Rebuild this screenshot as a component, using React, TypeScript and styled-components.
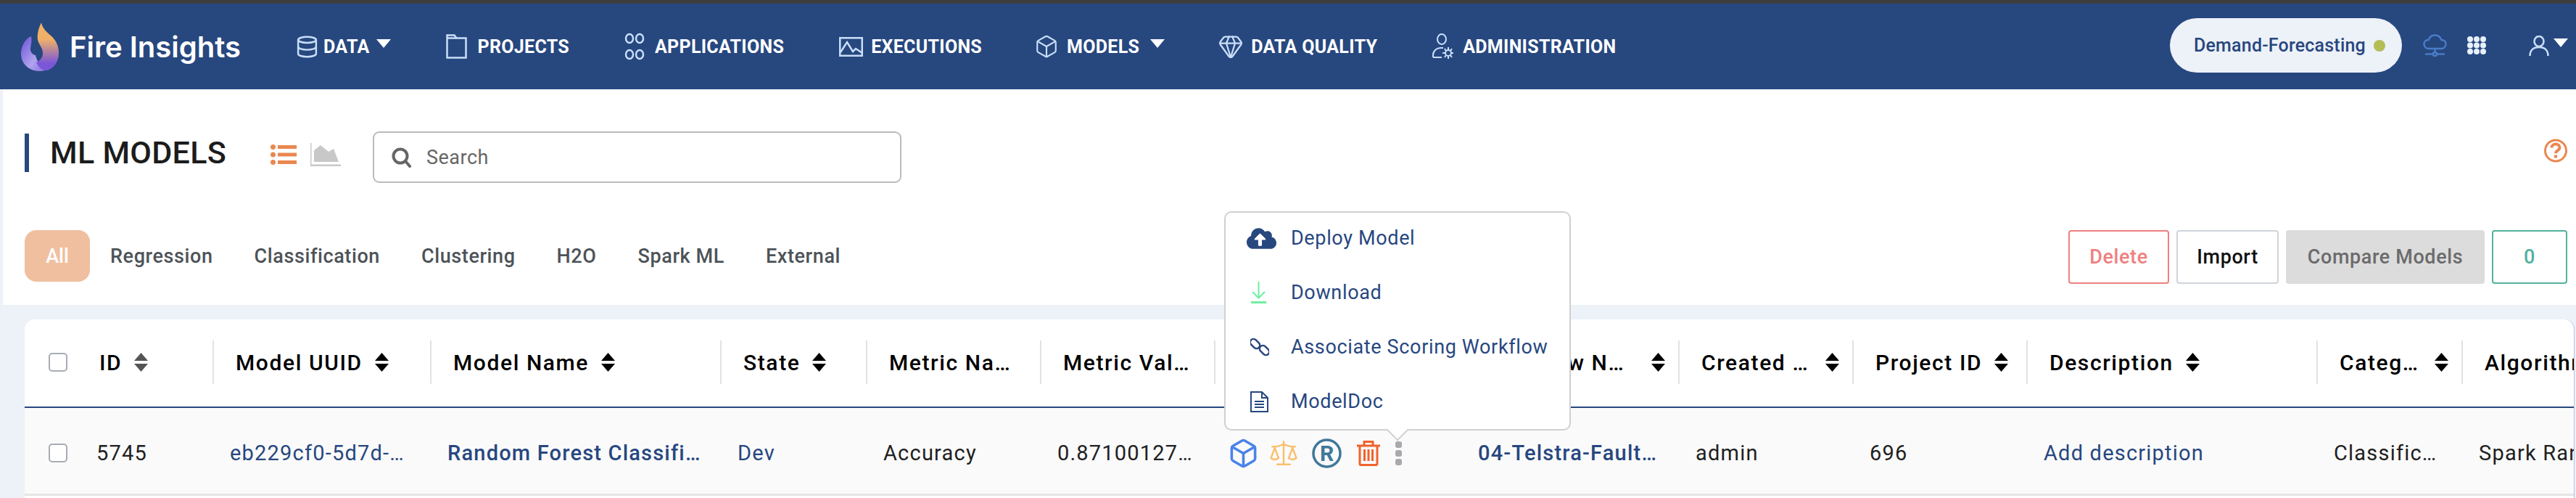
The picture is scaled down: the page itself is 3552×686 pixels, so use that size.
import React from "react";
import styled, { createGlobalStyle } from "styled-components";
import { Box, Database, Gem, Scale } from "lucide-react";
import { FaCloudUploadAlt } from "react-icons/fa";

const navy = "#27477f";
const iconBlue = "#c9def8";

const GlobalStyle = createGlobalStyle`
  html, body {
    margin: 0;
    padding: 0;
    background: #edf1f8;
    font-family: Roboto, "Liberation Sans", sans-serif;
  }
  * { box-sizing: border-box; }
`;

const Page = styled.div`
  width: 3552px;
  height: 686px;
  overflow: hidden;
  background: #edf1f8;
`;

const WindowEdge = styled.div`
  height: 5px;
  background: #3d3d3d;
`;

const NavBar = styled.header`
  height: 118px;
  background: ${navy};
  display: flex;
  align-items: center;
  padding: 0 11px 0 29px;
`;

const Brand = styled.div`
  display: flex;
  align-items: center;
  gap: 15px;
  margin-right: 82px;
`;

const BrandName = styled.span`
  font-family: Inter, Roboto, sans-serif;
  font-size: 40px;
  font-weight: 600;
  color: #fff;
  width: 233px;
  white-space: nowrap;
`;

const NavItems = styled.nav`
  display: flex;
  align-items: center;
  gap: 76px;
`;

const NavItem = styled.a<{ $gap: number }>`
  display: flex;
  align-items: center;
  gap: ${({ $gap }) => $gap}px;
  color: #fff;
  font-size: 25px;
  font-weight: 700;
  letter-spacing: 0.3px;
  white-space: nowrap;
`;

const Caret = styled.span`
  width: 0;
  height: 0;
  margin-top: -8px;
  border-left: 10px solid transparent;
  border-right: 10px solid transparent;
  border-top: 12px solid #fff;
`;

const NavRight = styled.div`
  margin: -3px 0 0 auto;
  display: flex;
  align-items: center;
`;

const WorkspacePill = styled.div`
  width: 320px;
  height: 75px;
  border-radius: 38px;
  background: #edf1f8;
  color: ${navy};
  display: flex;
  align-items: center;
  justify-content: space-between;
  padding: 0 23px 0 33px;
  font-size: 25px;
  font-weight: 500;
  letter-spacing: 0.2px;
  margin-right: 29px;
`;

const StatusDot = styled.span`
  width: 16px;
  height: 16px;
  border-radius: 50%;
  background: #b5bd55;
`;

const NavIconGroup = styled.div<{ $gap: number; $after: number }>`
  display: flex;
  align-items: center;
  gap: ${({ $gap }) => $gap}px;
  margin-right: ${({ $after }) => $after}px;
`;

const DataGlyph = styled(Database)`
  margin: 0 -4px;
`;

const ModelGlyph = styled(Box)`
  margin: 0 -4px;
`;

const QualityGlyph = styled(Gem)`
  margin: 0 -3px;
`;

const ToolPanel = styled.section`
  height: 297px;
  margin-left: 4px;
  background: #fff;
  padding: 58px 12px 0 30px;
`;

const TitleRow = styled.div`
  height: 71px;
  display: flex;
  align-items: flex-start;
`;

const PageTitle = styled.h1`
  margin: 3px 0 0;
  height: 53px;
  width: 339px;
  border-left: 6px solid ${navy};
  padding-left: 29px;
  font-size: 43px;
  line-height: 53px;
  font-weight: 500;
  letter-spacing: 0.3px;
  color: #1c1c1c;
  white-space: nowrap;
`;

const ViewSwitch = styled.div`
  display: flex;
  align-items: center;
  gap: 19px;
  margin-top: 16px;
  width: 141px;
`;

const SearchBox = styled.div`
  width: 729px;
  height: 71px;
  border: 2px solid #bbb;
  border-radius: 9px;
  display: flex;
  align-items: center;
  gap: 21px;
  padding-left: 24px;
  color: #666;
  font-size: 27px;
  letter-spacing: 0.5px;
`;

const HelpButton = styled.div`
  margin: 10px 0 0 auto;
  display: flex;
`;

const FilterRow = styled.div`
  margin-top: 65px;
  display: flex;
  align-items: flex-start;
  justify-content: space-between;
`;

const Tabs = styled.div`
  display: flex;
  align-items: center;
  height: 71px;
`;

const AllTab = styled.span`
  width: 90px;
  height: 71px;
  border-radius: 16px;
  background: #f0bfa0;
  color: #fff;
  font-size: 27px;
  font-weight: 500;
  display: flex;
  align-items: center;
  justify-content: center;
  margin-right: 28px;
`;

const Tab = styled.span`
  font-size: 27px;
  font-weight: 500;
  letter-spacing: 0.6px;
  color: #4d5358;
  margin-right: 57px;
  white-space: nowrap;
`;

const Actions = styled.div`
  display: flex;
  align-items: center;
  gap: 10px;
`;

const ActionButton = styled.button<{ $width: number; $border: string; $fg: string; $bg?: string }>`
  width: ${({ $width }) => $width}px;
  height: 74px;
  padding: 0;
  border: 2px solid ${({ $border }) => $border};
  border-radius: 4px;
  background: ${({ $bg }) => $bg || "#fff"};
  color: ${({ $fg }) => $fg};
  font-family: inherit;
  font-size: 27px;
  font-weight: 500;
  letter-spacing: 0.6px;
`;

const Card = styled.section`
  margin: 20px 2px 0 34px;
  height: 246px;
  background: #fff;
  border-radius: 14px 14px 0 0;
  border-right: 1px solid #bdbde0;
`;

const columns = "259px 300px 400px 201px 240px 240px 340px 300px 240px 240px 400px 200px 155px";

const HeadRow = styled.div`
  height: 122px;
  display: grid;
  grid-template-columns: ${columns};
  align-items: center;
  padding-bottom: 2px;
  border-bottom: 2px solid ${navy};
`;

const HeadLabel = styled.span`
  white-space: nowrap;
  overflow: hidden;
  text-overflow: ellipsis;
`;

const HeadCell = styled.div<{ $gap?: number; $pad?: number }>`
  height: 60px;
  display: flex;
  align-items: center;
  gap: ${({ $gap }) => $gap ?? 17}px;
  padding: 0 ${({ $pad }) => $pad ?? 18}px 0 30px;
  border-left: 2px solid #e2e2e2;
  font-size: 30px;
  font-weight: 500;
  letter-spacing: 1.6px;
  color: #000;
  min-width: 0;

  &:first-child {
    border-left: 0;
    padding-left: 33px;
  }
  &:last-child {
    padding-right: 0;
    overflow: hidden;
  }
  &:last-child ${HeadLabel} {
    flex: none;
    overflow: visible;
  }
`;

const CheckBox = styled.span<{ $space: number }>`
  flex: none;
  width: 26px;
  height: 26px;
  border: 2px solid #a8adb5;
  border-radius: 5px;
  background: #fff;
  margin-right: ${({ $space }) => $space}px;
`;

const DataRow = styled.div`
  height: 121px;
  display: grid;
  grid-template-columns: ${columns};
  background: #fafafa;
  border-bottom: 3px solid #e6e6e6;
`;

const CellText = styled.span`
  white-space: nowrap;
  overflow: hidden;
  text-overflow: ellipsis;
`;

const DataCell = styled.div<{ $link?: boolean; $strong?: boolean }>`
  position: relative;
  display: flex;
  align-items: center;
  min-width: 0;
  padding: 6px 26px 0 24px;
  font-size: 29px;
  letter-spacing: 1.2px;
  font-weight: ${({ $strong }) => ($strong ? 500 : 400)};
  color: ${({ $link, $strong }) => ($link || $strong ? navy : "#212121")};

  &:first-child {
    padding-left: 33px;
  }
  &:last-child {
    padding-right: 0;
    overflow: hidden;
  }
  &:last-child ${CellText} {
    flex: none;
    overflow: visible;
  }
`;

const RowTools = styled.div`
  display: flex;
  align-items: center;
  gap: 21px;
`;

const ToolCube = styled(Box)`
  margin: 0 -5px;
`;

const ToolScale = styled(Scale)`
  margin: 0 -3px;
`;

const RegisteredMark = styled.text`
  font-family: Roboto, sans-serif;
  font-size: 30px;
  font-weight: 700;
  fill: #40789a;
  letter-spacing: 0;
`;

const MoreDots = styled.div`
  display: flex;
  flex-direction: column;
  gap: 3px;

  span {
    width: 9px;
    height: 9px;
    border-radius: 3px;
    background: #a8a9ad;
  }
`;

const Popover = styled.div`
  position: absolute;
  left: 14px;
  top: -271px;
  width: 478px;
  height: 302px;
  background: #fff;
  border: 2px solid #d0d0d0;
  border-radius: 10px;
  z-index: 5;

  &::after {
    content: "";
    position: absolute;
    left: 226px;
    bottom: -12px;
    width: 20px;
    height: 20px;
    background: #fff;
    border-right: 2px solid #d0d0d0;
    border-bottom: 2px solid #d0d0d0;
    transform: rotate(45deg);
  }
`;

const MenuItem = styled.div`
  height: 75px;
  padding-bottom: 5px;
  display: flex;
  align-items: center;
  color: ${navy};
  font-size: 27px;
  letter-spacing: 0.65px;
  white-space: nowrap;
`;

const MenuIcon = styled.span`
  width: 90px;
  padding-left: 34px;
  display: flex;
  align-items: center;
  flex: none;
`;

const DeployGlyph = styled(FaCloudUploadAlt)`
  margin-left: -5px;
`;

const SortIcon = ({ muted }: { muted?: boolean }) => (
  <svg width="19" height="26" viewBox="0 0 19 26" style={{ flex: "none" }}>
    <path d="M9.5 0 19 11H0Z M0 15h19L9.5 26Z" fill={muted ? "#555" : "#000"} />
  </svg>
);

const Logo = () => (
  <svg width="52" height="68" viewBox="0 0 52 68">
    <defs>
      <linearGradient id="flame" x1="0" y1="0" x2="0" y2="1">
        <stop offset="0.35" stopColor="#efb068" />
        <stop offset="0.85" stopColor="#7a56d8" />
      </linearGradient>
      <linearGradient id="body" x1="0" y1="0" x2="1" y2="1">
        <stop offset="0" stopColor="#6a4fd8" />
        <stop offset="0.6" stopColor="#b0a4ee" />
        <stop offset="1" stopColor="#8266de" />
      </linearGradient>
    </defs>
    <path d="M14 20C4 24 0 36 0 44c0 14 11 24 26 24 6 0 9-2 10-4-10-2-14-10-16-18-3 0-8-4-7-10 1-6 2-11 1-16Z" fill="url(#body)" />
    <path d="M28 1c-4 8-6 16-5 24 2 8 7 10 7 19 0 6-5 10-9 12 3 7 9 11 15 11 9-3 16-11 16-24 0-10-4-18-11-24-6-5-12-11-13-18Z" fill="url(#flame)" />
  </svg>
);

const FolderIcon = () => (
  <svg width="29" height="34" viewBox="0 0 29 34" fill="none" stroke={iconBlue} strokeWidth="2.5">
    <path d="M1.5 32.5V1.5h10l3 4h13v27Z" />
    <path d="M1.5 5.5h13" />
  </svg>
);

const AppsIcon = () => (
  <svg width="28" height="38" viewBox="0 0 28 38" fill="none" stroke={iconBlue} strokeWidth="2.5">
    <ellipse cx="7" cy="8" rx="5" ry="6" />
    <ellipse cx="21" cy="8" rx="5" ry="6" />
    <ellipse cx="7" cy="30" rx="5" ry="6" />
    <ellipse cx="21" cy="30" rx="5" ry="6" />
  </svg>
);

const ExecutionsIcon = () => (
  <svg width="33" height="27" viewBox="0 0 33 27" fill="none" stroke={iconBlue} strokeWidth="2.5">
    <rect x="1.25" y="1.25" width="30.5" height="24.5" />
    <path d="M2 21 11 7l8 13 4-4 9 6" />
  </svg>
);

const AdminIcon = () => (
  <svg width="29" height="36" viewBox="0 0 29 36" fill="none" stroke={iconBlue} strokeWidth="2">
    <ellipse cx="13" cy="8" rx="6" ry="7" />
    <path d="M1 33c-1-8 4-13 11-13h3" />
    <path d="M1 33h12" />
    <circle cx="22" cy="27" r="4" />
    <path d="M22 19v4M22 31v4M14 27h4M26 27h3M17 21l2 3M27 21l-2 3M17 33l2-3M27 33l-2-3" />
  </svg>
);

const CloudNetIcon = () => (
  <svg width="33" height="32" viewBox="0 0 33 32" fill="none" stroke="#4a7cc8" strokeWidth="2.5">
    <path d="M8 20C4 20 1.500 17 1.500 13.500S4 8 7.500 8C9 4 12.500 1.500 16.500 1.500S24 4 25.500 8C29 8 31.500 10 31.500 13.500S29 20 25 20Z" />
    <path d="M16.500 20v6M3 27.500h27" />
    <circle cx="16.500" cy="27.500" r="2.500" fill={navy} />
  </svg>
);

const AppGridIcon = () => (
  <svg width="26" height="25" viewBox="0 0 26 25" fill="#e8f0fb">
    {[4, 12.5, 21].flatMap((y) =>
      [4, 13, 22].map((x) => <circle key={`${x}-${y}`} cx={x} cy={y} r="4" />)
    )}
  </svg>
);

const UserIcon = () => (
  <svg width="28" height="28" viewBox="0 0 28 28" fill="none" stroke={iconBlue} strokeWidth="2.500">
    <ellipse cx="14" cy="8" rx="6.500" ry="7" />
    <path d="M1.500 28c0-8 5-12 12.500-12s12.500 4 12.500 12" />
  </svg>
);

const ListIcon = () => (
  <svg width="36" height="28" viewBox="0 0 36 28" fill="#ea8750">
    <circle cx="3.500" cy="3.500" r="3.500" />
    <circle cx="3.500" cy="14" r="3.500" />
    <circle cx="3.500" cy="24.500" r="3.500" />
    <rect x="10" y="1" width="26" height="5" />
    <rect x="10" y="11.500" width="26" height="5" />
    <rect x="10" y="22" width="26" height="5" />
  </svg>
);

const AreaIcon = () => (
  <svg width="42" height="32" viewBox="0 0 42 32" fill="#c8c8c8">
    <path d="M5 26V10L14 3l11 9 7-4 7 18Z" />
    <path d="M0 0h1.500v29.500H42V32H0Z" />
  </svg>
);

const SearchIcon = () => (
  <svg width="27" height="28" viewBox="0 0 27 28" fill="none" stroke="#666" strokeWidth="4">
    <circle cx="12" cy="12" r="9.500" />
    <path d="m19 19 6 7" strokeLinecap="round" />
  </svg>
);

const HelpIcon = () => (
  <svg width="32" height="33" viewBox="0 0 32 33" fill="none" stroke="#ea8750">
    <circle cx="16" cy="16.500" r="14.500" strokeWidth="3" />
    <path d="M10.500 12.500c0-3.500 2.500-5 5.500-5s5.500 1.800 5.500 4.800c0 4-5.500 4-5.500 8" strokeWidth="4" />
    <path d="M16 22.500v4" strokeWidth="4" />
  </svg>
);

const DownloadIcon = () => (
  <svg width="23" height="30" viewBox="0 0 23 30" fill="none" stroke="#6ef0a0" strokeWidth="2">
    <path d="M11.500 0v22M3 14l8.500 8.500L20 14" />
    <path d="M1 28.500h21" strokeWidth="3" />
  </svg>
);

const ChainIcon = () => (
  <svg width="26" height="26" viewBox="0 0 26 26" fill="none" stroke={navy} strokeWidth="2.500">
    <rect x="-1" y="4" width="15" height="9" rx="4.500" transform="rotate(45 6.500 8.500)" />
    <rect x="12" y="13" width="15" height="9" rx="4.500" transform="rotate(45 19.500 17.500)" />
  </svg>
);

const DocIcon = () => (
  <svg width="25" height="29" viewBox="0 0 25 29" fill="none" stroke={navy} strokeWidth="2">
    <path d="M1 1h15l8 8v19H1Z" />
    <path d="M16 1v8h8M6 14h13M6 18h13M6 22h13" />
  </svg>
);

const TrashIcon = () => (
  <svg width="32" height="36" viewBox="0 0 32 36" fill="none" stroke="#f0622c" strokeWidth="3">
    <path d="M0 8h32M10 7V2.500h12V7M4 8v25a1.500 1.500 0 0 0 1.500 1.500h21A1.500 1.500 0 0 0 28 33V8" />
    <path d="M10.500 13v16M16 13v16M21.500 13v16" />
  </svg>
);

const RegisteredIcon = () => (
  <svg width="41" height="41" viewBox="0 0 41 41" fill="none">
    <circle cx="20.500" cy="20.500" r="18.500" stroke="#40789a" strokeWidth="3.500" />
    <RegisteredMark x="20.500" y="31" textAnchor="middle">R</RegisteredMark>
  </svg>
);

const navLinks = [
  { label: "DATA", gap: 10, icon: <DataGlyph size={33} color={iconBlue} strokeWidth={1.8} />, caret: true },
  { label: "PROJECTS", gap: 14, icon: <FolderIcon /> },
  { label: "APPLICATIONS", gap: 14, icon: <AppsIcon /> },
  { label: "EXECUTIONS", gap: 11, icon: <ExecutionsIcon /> },
  { label: "MODELS", gap: 15, icon: <ModelGlyph size={34} color={iconBlue} strokeWidth={1.5} />, caret: true },
  { label: "DATA QUALITY", gap: 13, icon: <QualityGlyph size={36} color={iconBlue} strokeWidth={1.5} /> },
  { label: "ADMINISTRATION", gap: 13, icon: <AdminIcon /> },
];

const tabs = ["Regression", "Classification", "Clustering", "H2O", "Spark ML", "External"];

const headers = [
  { label: "ID", sort: "muted" },
  { label: "Model UUID", sort: "on" },
  { label: "Model Name", sort: "on" },
  { label: "State", sort: "on" },
  { label: "Metric Name" },
  { label: "Metric Value", pad: 30 },
  { label: "Actions" },
  { label: "Workflow Name", sort: "on", gap: 24 },
  { label: "Created By", sort: "on" },
  { label: "Project ID", sort: "on" },
  { label: "Description", sort: "on" },
  { label: "Category", sort: "on" },
  { label: "Algorithm", sort: "on" },
];

const menu = [
  { label: "Deploy Model", icon: <DeployGlyph size={41} color={navy} /> },
  { label: "Download", icon: <DownloadIcon /> },
  { label: "Associate Scoring Workflow", icon: <ChainIcon /> },
  { label: "ModelDoc", icon: <DocIcon /> },
];

export default function App() {
  return (
    <Page>
      <GlobalStyle />
      <WindowEdge />
      <NavBar>
        <Brand>
          <Logo />
          <BrandName>Fire Insights</BrandName>
        </Brand>
        <NavItems>
          {navLinks.map((link) => (
            <NavItem key={link.label} $gap={link.gap}>
              {link.icon}
              {link.label}
              {link.caret && <Caret />}
            </NavItem>
          ))}
        </NavItems>
        <NavRight>
          <WorkspacePill>
            Demand-Forecasting
            <StatusDot />
          </WorkspacePill>
          <NavIconGroup $gap={28} $after={59}>
            <CloudNetIcon />
            <AppGridIcon />
          </NavIconGroup>
          <NavIconGroup $gap={6} $after={0}>
            <UserIcon />
            <Caret />
          </NavIconGroup>
        </NavRight>
      </NavBar>

      <ToolPanel>
        <TitleRow>
          <PageTitle>ML MODELS</PageTitle>
          <ViewSwitch>
            <ListIcon />
            <AreaIcon />
          </ViewSwitch>
          <SearchBox>
            <SearchIcon />
            Search
          </SearchBox>
          <HelpButton>
            <HelpIcon />
          </HelpButton>
        </TitleRow>
        <FilterRow>
          <Tabs>
            <AllTab>All</AllTab>
            {tabs.map((tab) => (
              <Tab key={tab}>{tab}</Tab>
            ))}
          </Tabs>
          <Actions>
            <ActionButton $width={139} $border="#ee8080" $fg="#ee8080">Delete</ActionButton>
            <ActionButton $width={141} $border="#cfd4da" $fg="#111">Import</ActionButton>
            <ActionButton $width={274} $border="#dcdcdc" $bg="#dcdcdc" $fg="#6b6b6b">Compare Models</ActionButton>
            <ActionButton $width={104} $border="#52b29d" $fg="#52b29d">0</ActionButton>
          </Actions>
        </FilterRow>
      </ToolPanel>

      <Card>
        <HeadRow>
          {headers.map((header, i) => (
            <HeadCell key={header.label} $gap={header.gap} $pad={header.pad}>
              {i === 0 && <CheckBox $space={27} />}
              <HeadLabel>{header.label}</HeadLabel>
              {header.sort && <SortIcon muted={header.sort === "muted"} />}
            </HeadCell>
          ))}
        </HeadRow>
        <DataRow>
          <DataCell>
            <CheckBox $space={40} />
            <CellText>5745</CellText>
          </DataCell>
          <DataCell $link><CellText>eb229cf0-5d7d-4b1e-9a6c-2f3</CellText></DataCell>
          <DataCell $strong><CellText>Random Forest Classification Model</CellText></DataCell>
          <DataCell $link><CellText>Dev</CellText></DataCell>
          <DataCell><CellText>Accuracy</CellText></DataCell>
          <DataCell><CellText>0.8710012738853503</CellText></DataCell>
          <DataCell>
            <RowTools>
              <ToolCube size={43} color="#4a83ea" strokeWidth={2} />
              <ToolScale size={42} color="#f9c06e" strokeWidth={1.4} />
              <RegisteredIcon />
              <TrashIcon />
              <MoreDots>
                <span />
                <span />
                <span />
              </MoreDots>
            </RowTools>
            <Popover>
              {menu.map((item) => (
                <MenuItem key={item.label}>
                  <MenuIcon>{item.icon}</MenuIcon>
                  {item.label}
                </MenuItem>
              ))}
            </Popover>
          </DataCell>
          <DataCell $strong><CellText>04-Telstra-Fault-Severity</CellText></DataCell>
          <DataCell><CellText>admin</CellText></DataCell>
          <DataCell><CellText>696</CellText></DataCell>
          <DataCell $link><CellText>Add description</CellText></DataCell>
          <DataCell><CellText>Classification</CellText></DataCell>
          <DataCell><CellText>Spark Random Forest</CellText></DataCell>
        </DataRow>
      </Card>
    </Page>
  );
}
